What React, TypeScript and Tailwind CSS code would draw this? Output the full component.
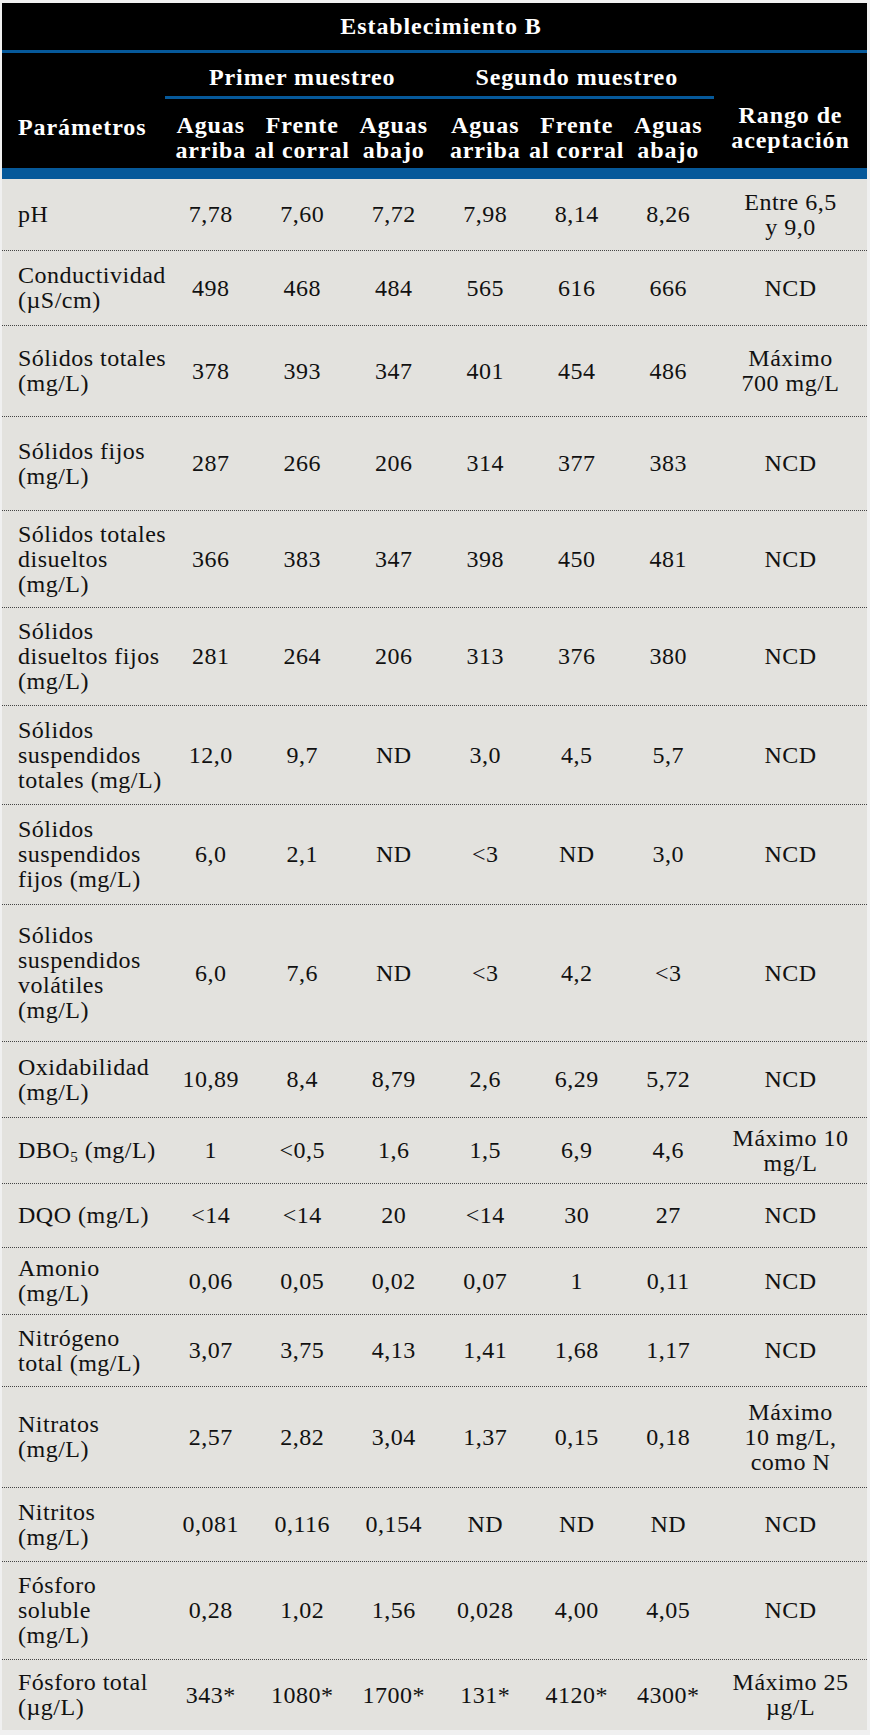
import React from 'react';

type Row = {
  name: React.ReactNode[];
  vals: string[];
  range?: string[];
  h: string;
};

const rows: Row[] = [
  { name: ['pH'], vals: ['7,78', '7,60', '7,72', '7,98', '8,14', '8,26'], range: ['Entre 6,5', 'y 9,0'], h: 'h-[72px]' },
  { name: ['Conductividad', '(µS/cm)'], vals: ['498', '468', '484', '565', '616', '666'], h: 'h-[75px]' },
  { name: ['Sólidos totales', '(mg/L)'], vals: ['378', '393', '347', '401', '454', '486'], range: ['Máximo', '700 mg/L'], h: 'h-[91px]' },
  { name: ['Sólidos fijos', '(mg/L)'], vals: ['287', '266', '206', '314', '377', '383'], h: 'h-[94px]' },
  { name: ['Sólidos totales', 'disueltos', '(mg/L)'], vals: ['366', '383', '347', '398', '450', '481'], h: 'h-[97px]' },
  { name: ['Sólidos', 'disueltos fijos', '(mg/L)'], vals: ['281', '264', '206', '313', '376', '380'], h: 'h-[98px]' },
  { name: ['Sólidos', 'suspendidos', 'totales (mg/L)'], vals: ['12,0', '9,7', 'ND', '3,0', '4,5', '5,7'], h: 'h-[99px]' },
  { name: ['Sólidos', 'suspendidos', 'fijos (mg/L)'], vals: ['6,0', '2,1', 'ND', '<3', 'ND', '3,0'], h: 'h-[100px]' },
  { name: ['Sólidos', 'suspendidos', 'volátiles', '(mg/L)'], vals: ['6,0', '7,6', 'ND', '<3', '4,2', '<3'], h: 'h-[137px]' },
  { name: ['Oxidabilidad', '(mg/L)'], vals: ['10,89', '8,4', '8,79', '2,6', '6,29', '5,72'], h: 'h-[76px]' },
  {
    name: [
      <span key="dbo">
        DBO<sub className="text-[15px]">5</sub> (mg/L)
      </span>,
    ],
    vals: ['1', '<0,5', '1,6', '1,5', '6,9', '4,6'],
    range: ['Máximo 10', 'mg/L'],
    h: 'h-[66px]',
  },
  { name: ['DQO (mg/L)'], vals: ['<14', '<14', '20', '<14', '30', '27'], h: 'h-[64px]' },
  { name: ['Amonio', '(mg/L)'], vals: ['0,06', '0,05', '0,02', '0,07', '1', '0,11'], h: 'h-[67px]' },
  { name: ['Nitrógeno', 'total (mg/L)'], vals: ['3,07', '3,75', '4,13', '1,41', '1,68', '1,17'], h: 'h-[72px]' },
  { name: ['Nitratos', '(mg/L)'], vals: ['2,57', '2,82', '3,04', '1,37', '0,15', '0,18'], range: ['Máximo', '10 mg/L,', 'como N'], h: 'h-[101px]' },
  { name: ['Nitritos', '(mg/L)'], vals: ['0,081', '0,116', '0,154', 'ND', 'ND', 'ND'], h: 'h-[74px]' },
  { name: ['Fósforo', 'soluble', '(mg/L)'], vals: ['0,28', '1,02', '1,56', '0,028', '4,00', '4,05'], h: 'h-[98px]' },
  { name: ['Fósforo total', '(µg/L)'], vals: ['343*', '1080*', '1700*', '131*', '4120*', '4300*'], range: ['Máximo 25', 'µg/L'], h: 'h-[70px]' },
];

const cols = 'grid grid-cols-[163px_repeat(6,91.5px)_153px]';
const sub = [
  ['Aguas', 'arriba'],
  ['Frente', 'al corral'],
  ['Aguas', 'abajo'],
];

export default function App() {
  return (
    <div className="min-h-[1735px] bg-[#f0f0f0] pt-[3px] pl-[2px] pr-[3px] pb-[5px] font-['Liberation_Serif',serif]">
      <div className="w-[865px]">
        {/* header */}
        <div className="bg-black text-white font-bold tracking-[0.9px] text-[24px] leading-[25px]">
          <div className="h-[47px] flex items-center justify-center pl-[13px]">Establecimiento B</div>
          <div className="h-[3px] bg-[#06599a]" />
          <div className={`${cols} grid-rows-[46px_69px]`}>
            <div className="row-span-2 pl-[16px] pt-[62px]">Parámetros</div>
            <div className="col-span-3 flex items-end justify-center pb-[6px] border-b-[3px] border-[#06599a]">
              Primer muestreo
            </div>
            <div className="col-span-3 flex items-end justify-center pb-[6px] border-b-[3px] border-[#06599a]">
              Segundo muestreo
            </div>
            <div className="row-span-2 col-start-8 row-start-1 flex flex-col items-center pt-[50px]">
              <span>Rango de</span>
              <span>aceptación</span>
            </div>
            {[...sub, ...sub].map((s, i) => (
              <div key={i} className="flex flex-col items-center pt-[14px] whitespace-nowrap">
                <span>{s[0]}</span>
                <span>{s[1]}</span>
              </div>
            ))}
          </div>
          <div className="h-[11px] bg-[#06599a]" />
        </div>

        {/* body */}
        <div className="bg-[#e3e2de] text-[#111] text-[24px] leading-[25px] tracking-[0.5px]">
          {rows.map((r, i) => (
            <div
              key={i}
              className={`${cols} ${r.h} ${i < rows.length - 1 ? 'border-b border-dotted border-[#444]' : ''}`}
            >
              <div className="flex flex-col justify-center pl-[16px] whitespace-nowrap">
                {r.name.map((n, j) => (
                  <span key={j}>{n}</span>
                ))}
              </div>
              {r.vals.map((v, j) => (
                <div key={j} className="flex items-center justify-center whitespace-nowrap">
                  {v}
                </div>
              ))}
              <div className="flex flex-col items-center justify-center whitespace-nowrap">
                {(r.range ?? ['NCD']).map((t, j) => (
                  <span key={j}>{t}</span>
                ))}
              </div>
            </div>
          ))}
        </div>
      </div>
    </div>
  );
}
